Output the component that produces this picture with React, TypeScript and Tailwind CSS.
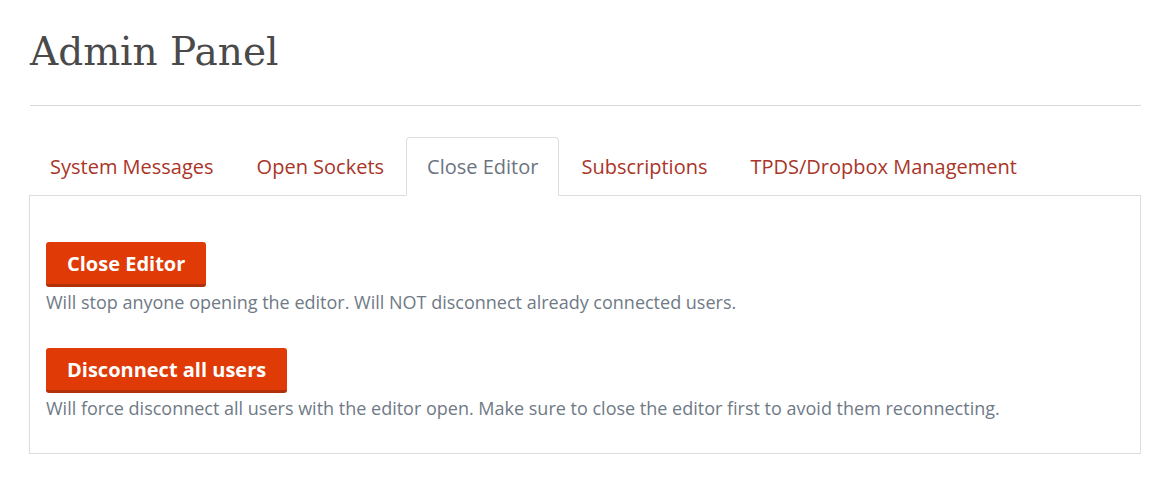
import React, { useState } from 'react';

const tabs = ['System Messages', 'Open Sockets', 'Close Editor', 'Subscriptions', 'TPDS/Dropbox Management'];

const App: React.FC = () => {
  const [active, setActive] = useState('Close Editor');

  const tabClasses = (name: string): string => {
    const base = 'block px-5 pt-[16px] pb-[15px] text-[20px] leading-[26px] rounded-t-[4px] border';
    return name === active
      ? `${base} bg-white text-[#6b7480] border-[#ddd] border-b-transparent`
      : `${base} text-[#a93529] border-transparent hover:bg-gray-50`;
  };

  return (
    <div className="min-h-screen bg-white px-[30px] font-['Open_Sans',sans-serif] text-[#5d6879]">
      <h1 className="pt-[29px] pb-[30px] font-['DejaVu_Serif',serif] text-[39px] leading-[46px] text-[#4a4a4a]">
        Admin Panel
      </h1>
      <hr className="border-t border-[#d8d8d8] mr-[1px]" />

      <div className="mt-[31px] mr-[1px] -ml-px">
        <ul className="flex -mb-px">
          {tabs.map((t) => (
            <li key={t} className="mr-[1px]">
              <button type="button" onClick={() => setActive(t)} className={tabClasses(t)}>
                {t}
              </button>
            </li>
          ))}
        </ul>

        <div className="border border-[#ddd] px-4 pt-[46px] pb-[31px]">
          <button
            type="button"
            className="rounded-[3px] border-b-[3px] border-[#b0300a] bg-[#e03a06] px-[21px] pt-[8px] pb-[7px] text-[20px] font-bold leading-[27px] text-white"
          >
            Close Editor
          </button>
          <p className="mt-[2px] text-[18px] leading-[27px] text-[#6f7a86]">
            Will stop anyone opening the editor. Will NOT disconnect already connected users.
          </p>

          <button
            type="button"
            className="mt-[32px] rounded-[3px] border-b-[3px] border-[#b0300a] bg-[#e03a06] px-[21px] pt-[8px] pb-[7px] text-[20px] font-bold leading-[27px] text-white"
          >
            Disconnect all users
          </button>
          <p className="mt-[2px] text-[18px] leading-[27px] text-[#6f7a86]">
            Will force disconnect all users with the editor open. Make sure to close the editor first to avoid them reconnecting.
          </p>
        </div>
      </div>
    </div>
  );
};

export default App;
